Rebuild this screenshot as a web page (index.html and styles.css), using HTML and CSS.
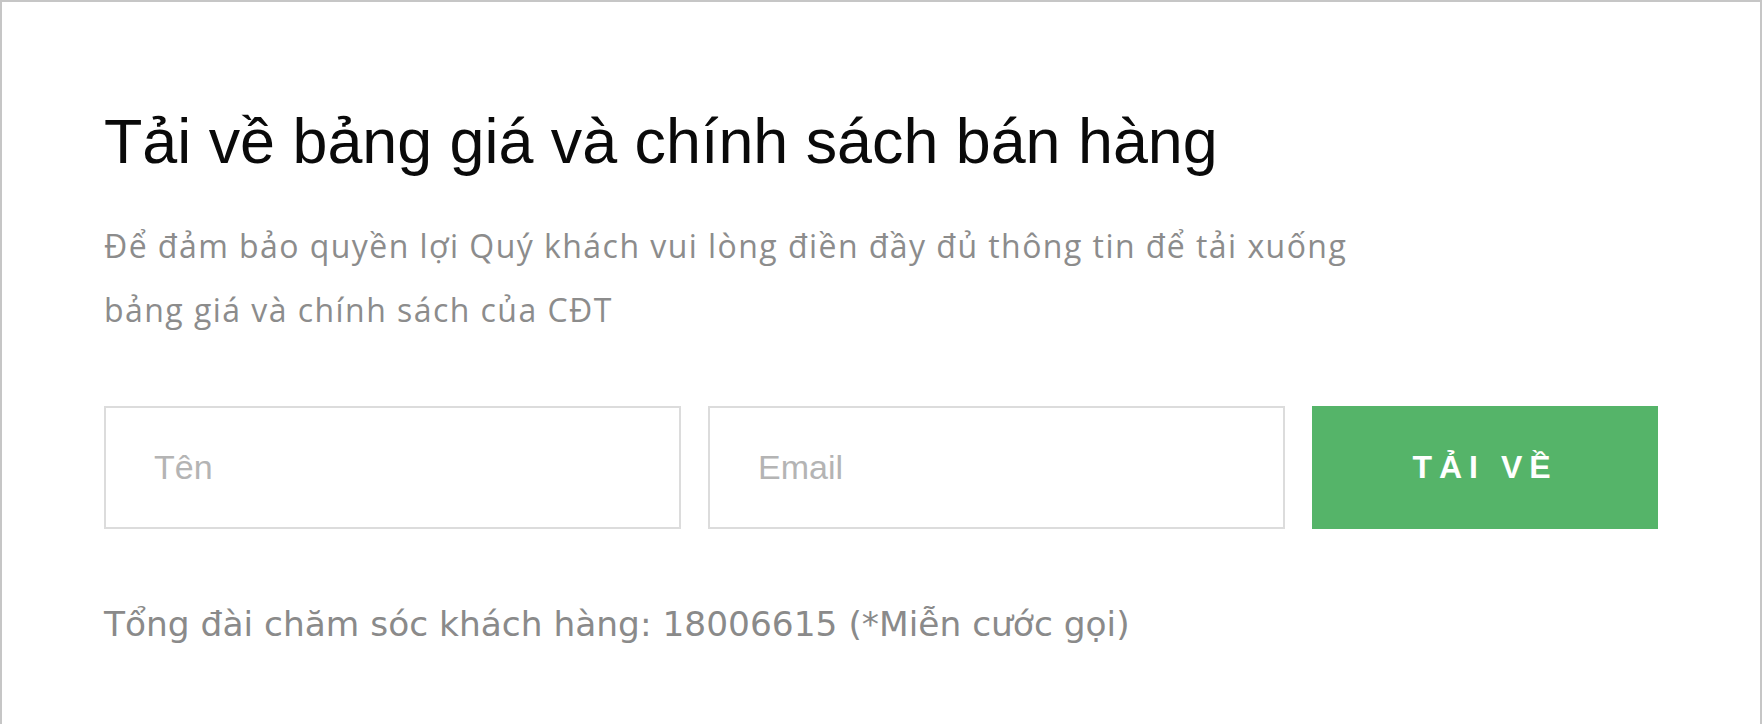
FILE: index.html
```html
<!DOCTYPE html>
<html lang="vi">
<head>
<meta charset="utf-8">
<title>Tải về bảng giá</title>
<link rel="stylesheet" href="styles.css">
</head>
<body>
<div class="panel">
  <h2 class="title">Tải về bảng giá và chính sách bán hàng</h2>
  <p class="desc">Để đảm bảo quyền lợi Quý khách vui lòng điền đầy đủ thông tin để tải xuống bảng giá và chính sách của CĐT</p>
  <form class="form-row">
    <input class="field" type="text" placeholder="Tên">
    <input class="field" type="email" placeholder="Email">
    <button class="btn" type="button">TẢI VỀ</button>
  </form>
  <p class="hotline">Tổng đài chăm sóc khách hàng: 18006615 (*Miễn cước gọi)</p>
</div>
</body>
</html>
```

FILE: styles.css
```css
html, body {
  margin: 0;
  padding: 0;
  background: #ffffff;
}
.panel {
  box-sizing: border-box;
  height: 724px;
  border: 2px solid #c6c6c6;
  border-bottom: none;
  padding: 102px 103px 0 102px;
  overflow: hidden;
}
.title {
  margin: 0;
  font-family: "Liberation Sans", Arial, sans-serif;
  font-weight: normal;
  font-size: 62.8px;
  line-height: 74px;
  color: #0a0a0a;
}
.desc {
  margin: 36px 0 0 0;
  max-width: 1290px;
  font-family: "Open Sans", sans-serif;
  font-size: 32px;
  letter-spacing: 1.45px;
  line-height: 64px;
  color: #8c8c8c;
}
.form-row {
  margin: 64px 0 0 0;
  display: flex;
  gap: 27px;
  height: 123px;
}
.field {
  box-sizing: border-box;
  flex: 0 0 577px;
  height: 123px;
  margin: 0;
  border: 2px solid #dcdcdc;
  padding: 0 0 0 48px;
  font-family: "Liberation Sans", Arial, sans-serif;
  font-size: 34px;
  color: #333;
  background: #fff;
  outline: none;
}
.field::placeholder {
  color: #b4b4b4;
}
.btn {
  flex: 0 0 346px;
  height: 123px;
  margin: 0;
  border: none;
  background: #55b469;
  color: #ffffff;
  font-family: "Liberation Sans", Arial, sans-serif;
  font-weight: bold;
  font-size: 32px;
  letter-spacing: 7px;
  padding: 0;
  cursor: pointer;
}
.hotline {
  margin: 71px 0 0 0;
  font-family: "DejaVu Sans", sans-serif;
  font-size: 34.4px;
  line-height: 48px;
  color: #8a8a8a;
}
```
